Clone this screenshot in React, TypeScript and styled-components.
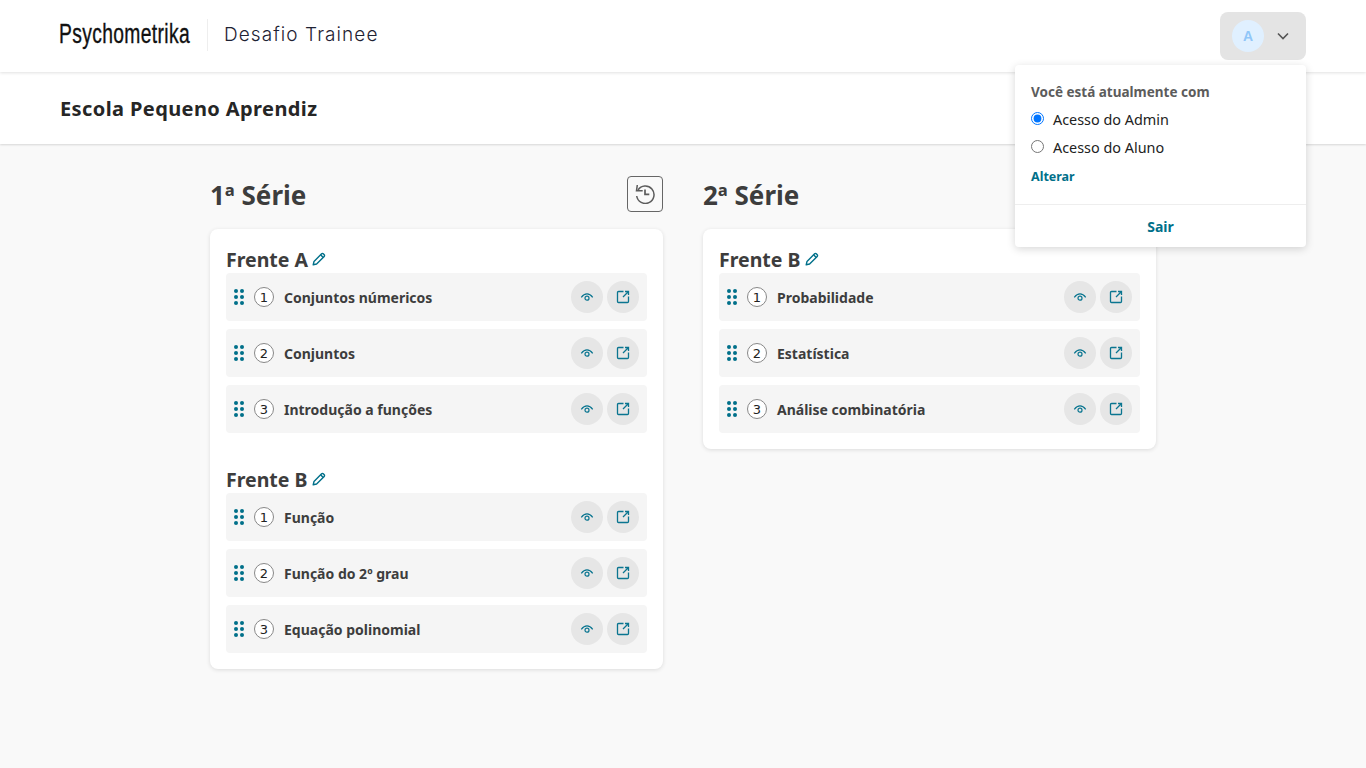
import React from 'react';
import styled, { createGlobalStyle } from 'styled-components';

const Global = createGlobalStyle`
  * { box-sizing: border-box; }
  html, body { margin: 0; padding: 0; background: #f9f9f9; height: 100%; }
  body { font-family: "Noto Sans", "Open Sans", sans-serif; color: #3d3d3d; overflow: hidden; }
`;

const Page = styled.div`
  position: relative;
  width: 1366px;
  height: 768px;
  background: #f9f9f9;
`;

const TopBar = styled.header`
  height: 72px;
  padding: 12px 60px 12px 59px;
  background: #fff;
  box-shadow: 0 1px 3px rgba(0,0,0,.12);
  display: flex;
  align-items: center;
  position: relative;
`;

const LogoBox = styled.span`
  width: 130px;
  height: 36px;
  display: inline-block;
  overflow: visible;
`;

const Logo = styled.span`
  font-family: "Liberation Sans", sans-serif;
  font-size: 27px;
  line-height: 32px;
  letter-spacing: 0.5px;
  color: #111;
  display: inline-block;
  white-space: nowrap;
  -webkit-text-stroke: 0.35px #111;
  transform: scaleX(0.714);
  transform-origin: left center;
`;

const Divider = styled.span`
  width: 1px;
  height: 32px;
  background: #eeeeee;
  margin: 0 16px 0 18px;
  position: relative;
  top: -1px;
`;

const Product = styled.span`
  font-family: "Inter", sans-serif;
  font-weight: 300;
  font-size: 19px;
  letter-spacing: 1.07px;
  color: #1e2233;
  white-space: nowrap;
  margin-bottom: 4px;
`;

const UserButton = styled.button`
  margin-left: auto;
  width: 86px;
  height: 48px;
  border: 0;
  border-radius: 8px;
  background: #e4e4e4;
  display: flex;
  align-items: center;
  padding: 0 12px;
  gap: 13px;
`;

const Avatar = styled.span`
  width: 32px;
  height: 32px;
  border-radius: 50%;
  background: #e0f0ff;
  color: #90c6f8;
  font-weight: 700;
  font-size: 14px;
  display: flex;
  align-items: center;
  justify-content: center;
`;

const SubBar = styled.div`
  height: 72px;
  padding: 0 60px;
  background: #fff;
  box-shadow: 0 1px 2px rgba(0,0,0,.14);
  display: flex;
  align-items: center;
`;

const SchoolName = styled.h1`
  margin: 0;
  font-size: 20px;
  font-weight: 700;
  letter-spacing: .4px;
  color: #262626;
`;

const Columns = styled.main`
  display: flex;
  gap: 40px;
  padding: 32px 0 0 210px;
`;

const Column = styled.section`
  width: 453px;
`;

const ColumnHead = styled.div`
  height: 36px;
  display: flex;
  align-items: center;
  justify-content: space-between;
  margin-bottom: 17px;
`;

const ColumnTitle = styled.h2`
  margin: 0;
  padding-top: 2px;
  font-size: 26px;
  font-weight: 700;
  color: #3d3d3d;
`;

const HistoryButton = styled.button`
  width: 36px;
  height: 36px;
  padding: 0;
  border: 1px solid #666;
  border-radius: 4px;
  background: transparent;
  display: flex;
  align-items: center;
  justify-content: center;
  color: #5c5c5c;
`;

const Card = styled.div`
  background: #fff;
  border-radius: 8px;
  box-shadow: 0 1px 4px rgba(0,0,0,.12);
  padding: 16px;
  display: flex;
  flex-direction: column;
  gap: 32px;
`;

const Group = styled.div`
  display: flex;
  flex-direction: column;
`;

const GroupTitle = styled.h3`
  margin: 0;
  height: 28px;
  display: flex;
  align-items: center;
  gap: 4px;
  font-size: 19.5px;
  font-weight: 700;
  color: #3d3d3d;
`;

const Rows = styled.div`
  display: flex;
  flex-direction: column;
  gap: 8px;
`;

const Row = styled.div`
  height: 48px;
  background: #f5f5f5;
  border-radius: 4px;
  display: flex;
  align-items: center;
  padding: 0 8px;
`;

const Index = styled.span`
  width: 20px;
  height: 20px;
  border-radius: 50%;
  border: 1px solid #888;
  background: #fff;
  color: #222;
  font-size: 13px;
  display: flex;
  align-items: center;
  justify-content: center;
  margin: 0 10px;
  font-family: "DejaVu Sans", sans-serif;
`;

const RowLabel = styled.span`
  flex: 1;
  font-size: 14px;
  font-weight: 700;
  color: #3d3d3d;
`;

const RoundButton = styled.button`
  width: 32px;
  height: 32px;
  padding: 0;
  margin-left: 4px;
  border: 0;
  border-radius: 50%;
  background: #e6e6e6;
  color: #0a7590;
  display: flex;
  align-items: center;
  justify-content: center;
`;

const Menu = styled.div`
  position: absolute;
  top: 65px;
  left: 1015px;
  width: 291px;
  height: 182px;
  background: #fff;
  border-radius: 4px;
  box-shadow: 0 2px 8px rgba(0,0,0,.16);
`;

const MenuBody = styled.div`
  padding: 17px 16px 0;
  height: 140px;
  border-bottom: 1px solid #eee;
`;

const MenuTitle = styled.div`
  font-size: 13.5px;
  font-weight: 700;
  color: #5c5c5c;
  height: 23px;
  line-height: 20px;
`;

const RadioRow = styled.label`
  display: flex;
  align-items: center;
  height: 28px;
  font-size: 14.4px;
  color: #222;
  gap: 9px;
`;

const Radio = styled.input`
  width: 13px;
  height: 13px;
  margin: 0;
  position: relative;
  top: -1px;
`;

const ChangeLink = styled.a`
  display: block;
  margin-top: 7px;
  font-size: 12.5px;
  font-weight: 700;
  color: #00708a;
`;

const Logout = styled.div`
  text-align: center;
  line-height: 44px;
  font-size: 14px;
  font-weight: 700;
  color: #00708a;
`;

const Chevron = () => (
  <svg width="12" height="8" viewBox="0 0 12 8" fill="none" stroke="#555" strokeWidth="1.6">
    <path d="M1 1.5l5 5 5-5" />
  </svg>
);

const History = () => (
  <svg width="20" height="20" viewBox="0 0 20 20" fill="none" stroke="currentColor" strokeWidth="1.5">
    <path d="M2.3 1L1.5 6.700H7.700" />
    <path d="M3 6A8.700 8.700 0 1 1 1.700 12" />
    <path d="M10 5.500V10.300H14.300" strokeWidth="1.700" />
  </svg>
);

const Pencil = () => (
  <svg width="14" height="14" viewBox="0 0 14 14" fill="none" stroke="#00708a" strokeWidth="1.4" strokeLinejoin="round">
    <path d="M1.200 12.800l.8-3.400L9.600 1.800a1.200 1.200 0 0 1 1.700 0l.9.9a1.200 1.200 0 0 1 0 1.700L4.600 12z" />
    <path d="M8.600 2.800l2.600 2.600" />
  </svg>
);

const Grip = () => (
  <svg width="10" height="16" viewBox="0 0 10 16" fill="#00708a">
    {[2, 8, 14].map((y) => (
      <React.Fragment key={y}>
        <circle cx="2" cy={y} r="2" />
        <circle cx="8" cy={y} r="2" />
      </React.Fragment>
    ))}
  </svg>
);

const Eye = () => (
  <svg width="14" height="14" viewBox="0 0 14 14" fill="none" stroke="currentColor" strokeWidth="1.2">
    <path d="M1.300 7.300C3 5 5 3.900 7 3.900s4 1.100 5.700 3.400" />
    <circle cx="7" cy="8.200" r="2" />
  </svg>
);

const External = () => (
  <svg width="14" height="14" viewBox="0 0 14 14" fill="none" stroke="currentColor" strokeWidth="1.300">
    <path d="M7.500 1.500H2.500a1 1 0 0 0-1 1v9a1 1 0 0 0 1 1h9a1 1 0 0 0 1-1V6.500" />
    <path d="M9 1.500h3.500V5M12.500 1.500L7 7" />
  </svg>
);

const data = [
  { title: '1ª Série', history: true, groups: [
    { name: 'Frente A', items: ['Conjuntos númericos', 'Conjuntos', 'Introdução a funções'] },
    { name: 'Frente B', items: ['Função', 'Função do 2º grau', 'Equação polinomial'] },
  ]},
  { title: '2ª Série', history: false, groups: [
    { name: 'Frente B', items: ['Probabilidade', 'Estatística', 'Análise combinatória'] },
  ]},
];

export default function App() {
  return (
    <Page>
      <Global />
      <TopBar>
        <LogoBox><Logo>Psychometrika</Logo></LogoBox>
        <Divider />
        <Product>Desafio Trainee</Product>
        <UserButton>
          <Avatar>A</Avatar>
          <Chevron />
        </UserButton>
      </TopBar>
      <SubBar><SchoolName>Escola Pequeno Aprendiz</SchoolName></SubBar>
      <Columns>
        {data.map((col) => (
          <Column key={col.title}>
            <ColumnHead>
              <ColumnTitle>{col.title}</ColumnTitle>
              {col.history && <HistoryButton><History /></HistoryButton>}
            </ColumnHead>
            <Card>
              {col.groups.map((g) => (
                <Group key={g.name}>
                  <GroupTitle>{g.name}<Pencil /></GroupTitle>
                  <Rows>
                    {g.items.map((item, i) => (
                      <Row key={item}>
                        <Grip />
                        <Index>{i + 1}</Index>
                        <RowLabel>{item}</RowLabel>
                        <RoundButton><Eye /></RoundButton>
                        <RoundButton><External /></RoundButton>
                      </Row>
                    ))}
                  </Rows>
                </Group>
              ))}
            </Card>
          </Column>
        ))}
      </Columns>
      <Menu>
        <MenuBody>
          <MenuTitle>Você está atualmente com</MenuTitle>
          <RadioRow><Radio type="radio" name="a" defaultChecked />Acesso do Admin</RadioRow>
          <RadioRow><Radio type="radio" name="a" />Acesso do Aluno</RadioRow>
          <ChangeLink>Alterar</ChangeLink>
        </MenuBody>
        <Logout>Sair</Logout>
      </Menu>
    </Page>
  );
}
